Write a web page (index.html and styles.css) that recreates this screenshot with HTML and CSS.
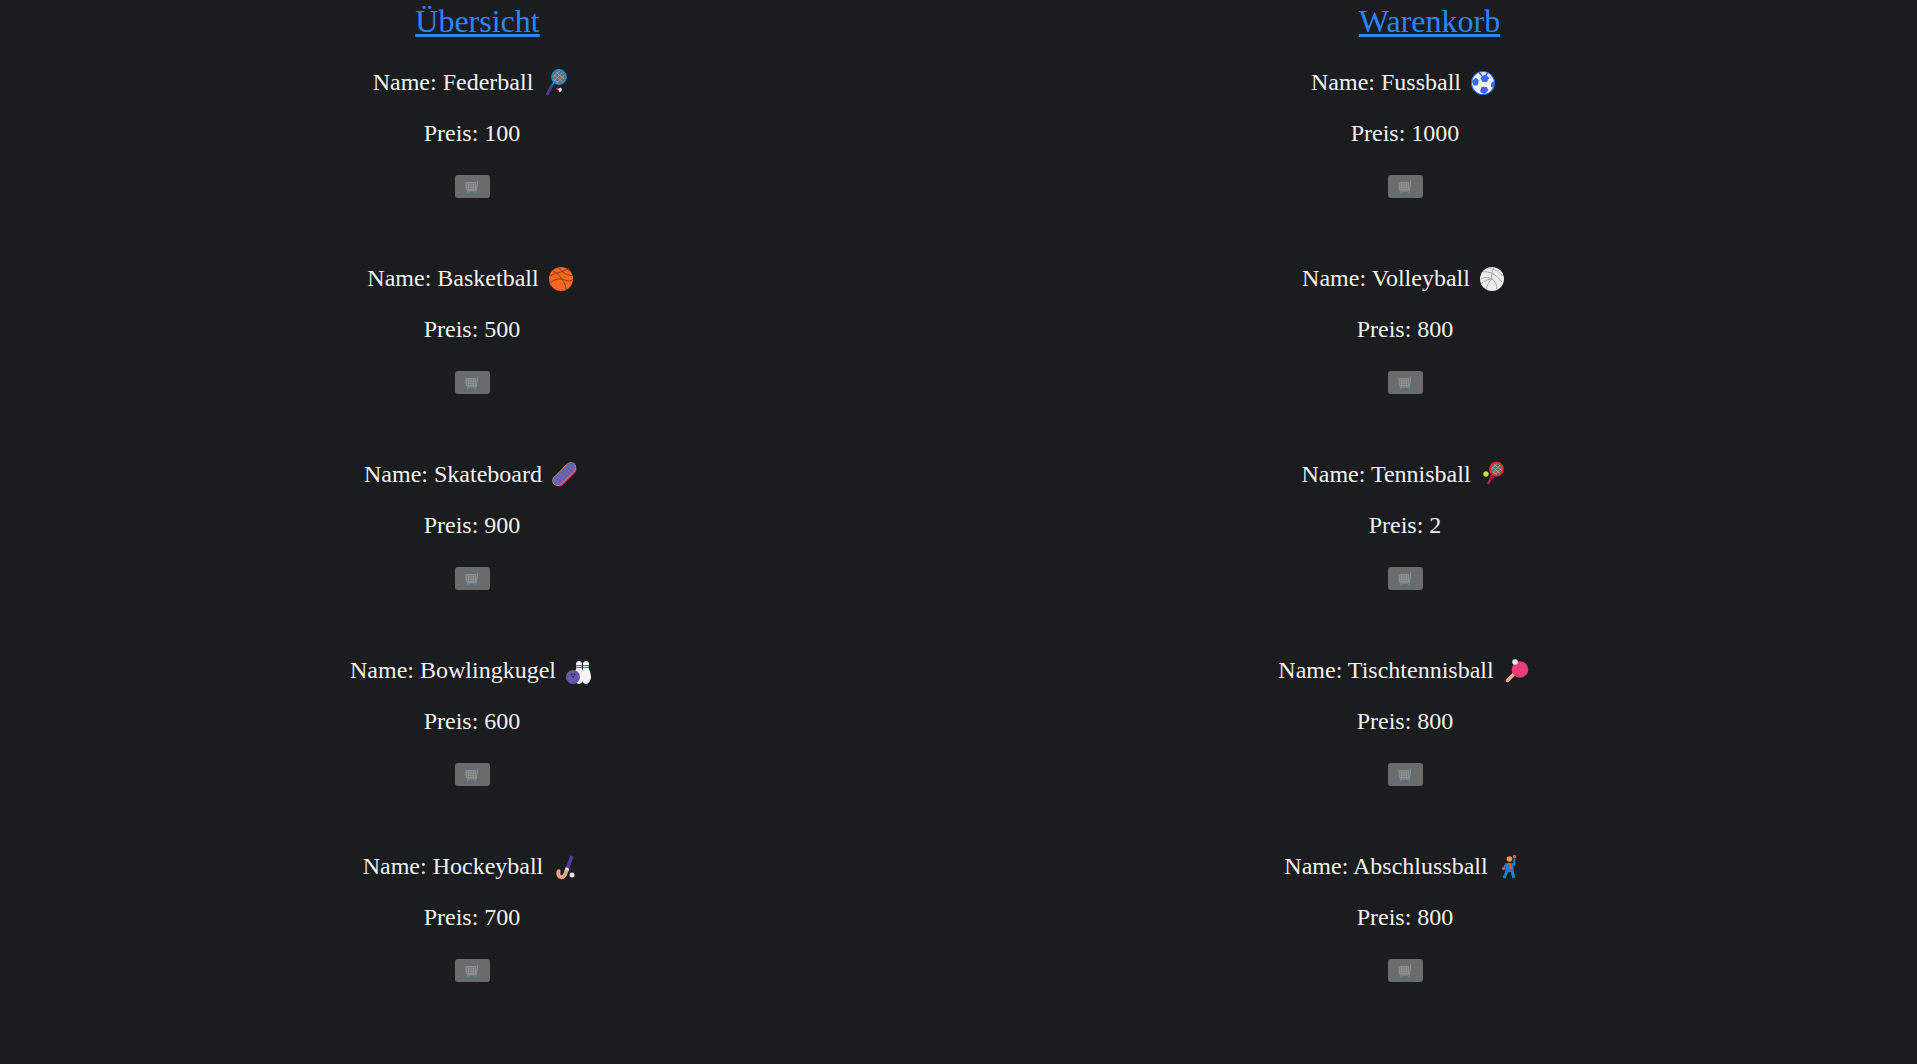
FILE: index.html
```html
<!DOCTYPE html>
<html lang="de">
<head>
    <meta charset="UTF-8">
    <meta name="viewport" content="width=device-width, initial-scale=1.0">
    <title>Sportshop</title>
    <link rel="stylesheet" href="styles.css">
</head>
<body>
    <svg class="icon-defs" aria-hidden="true">
        <symbol id="cart" viewBox="0 0 16 16">
            <path d="M1 3h11v8H1.500z" fill="#747474" stroke="#a8a8a8" stroke-width=".7"/>
            <path d="M1 5.700h11M1.300 8.300h10.700M4 3v8M6.800 3v8M9.500 3v8" stroke="#a4a4a4" stroke-width=".6"/>
            <path d="M14.500 1L13 12.500H2" fill="none" stroke="#9c9c9c" stroke-width="1"/>
            <path d="M14.300 2.200l.4-1.900" stroke="#2f95d8" stroke-width="1.400"/>
            <circle cx="3" cy="14" r="1.200" fill="#2f95d8"/>
            <circle cx="12" cy="14" r="1.200" fill="#2f95d8"/>
        </symbol>
    </svg>

    <main class="shop">
        <section class="column column-left">
            <h1 class="column-title"><a href="#">Übersicht</a></h1>

            <div class="product">
                <p>Name: Federball <svg class="emoji" viewBox="0 0 32 32"><path d="M8 28l5-10" stroke="#4b3a8f" stroke-width="3"/><path d="M13 18l3-4" stroke="#1688c8" stroke-width="2"/><circle cx="20" cy="10" r="7" fill="#66676b"/><path d="M15 8l9 7M16.500 5l9 7M14 12l6 4.500M23.500 5l-8.500 9M25.500 8l-8 8M20.500 4l-6.500 6.500" stroke="#aeafb2" stroke-width=".8"/><circle cx="20" cy="10" r="7" fill="none" stroke="#1a90cf" stroke-width="1.800"/><path d="M17 21.500l2-1 1.500 2-2 1z" fill="#e0168f"/><path d="M19 22l3-1.500 1 2.500-2.500 2.500z" fill="#f4f4f4"/></svg></p>
                <p>Preis: 100</p>
                <button class="cart-btn"><svg class="cart-icon"><use href="#cart"/></svg></button>
            </div>

            <div class="product">
                <p>Name: Basketball <svg class="emoji" viewBox="0 0 32 32"><circle cx="16" cy="16" r="12" fill="#f4681f"/><path d="M5 13c7-4 15-4 19-8M8 8c6 3 13 11 13 19M14 4.500c3 6 10 8 13.500 8M5 20c4-4 11-5 15-3 3 1.500 6 1 7.500-.5" fill="none" stroke="#8b3b1a" stroke-width="1"/></svg></p>
                <p>Preis: 500</p>
                <button class="cart-btn"><svg class="cart-icon"><use href="#cart"/></svg></button>
            </div>

            <div class="product">
                <p>Name: Skateboard <svg class="emoji" viewBox="0 0 32 32"><path d="M11.500 23L24 10.500" stroke="#d6266a" stroke-width="9" stroke-linecap="round"/><path d="M9.500 21.500c3-2 9-9 13.500-13" fill="none" stroke="#c9a06e" stroke-width="10.500" stroke-linecap="round"/><path d="M9.500 21.500c3-2 9-9 13.500-13" fill="none" stroke="#6a62ad" stroke-width="9.500" stroke-linecap="round"/><path d="M9 20l.6.6M11.500 22l.6.6M20 9l.6.6M22.500 11l.6.6" stroke="#2c2a55" stroke-width="1"/></svg></p>
                <p>Preis: 900</p>
                <button class="cart-btn"><svg class="cart-icon"><use href="#cart"/></svg></button>
            </div>

            <div class="product">
                <p>Name: Bowlingkugel <svg class="emoji" viewBox="0 0 32 32"><path d="M14 9c0-4 6-4 6 0 0 2-1 3 0 5 1 3 2 5 2 8 0 4-3 7-5 7s-5-3-5-7c0-3 1-5 2-8 .5-2 0-3 0-5z" fill="#f1eeee"/><path d="M21 9c0-4 6-4 6 0 0 2-1 3 0 5 1 3 2 5 2 8 0 4-3 7-5 7s-5-3-5-7c0-3 1-5 2-8 .5-2 0-3 0-5z" fill="#f6f4f4"/><path d="M14 10.500h6M14 12.500h6M21 10.500h6M21 12.500h6" stroke="#cf3e55" stroke-width="1"/><circle cx="11" cy="22" r="7" fill="#6856a8"/><circle cx="9.500" cy="19.500" r=".9" fill="#251f40"/><circle cx="12.500" cy="19.500" r=".9" fill="#251f40"/><circle cx="11" cy="22" r=".9" fill="#251f40"/></svg></p>
                <p>Preis: 600</p>
                <button class="cart-btn"><svg class="cart-icon"><use href="#cart"/></svg></button>
            </div>

            <div class="product">
                <p>Name: Hockeyball <svg class="emoji" viewBox="0 0 32 32"><path d="M23 5l-4.500 12" stroke="#59389c" stroke-width="3.600"/><path d="M18.500 17l-1.300 3.500" stroke="#f2f2f2" stroke-width="3.800"/><path d="M17.200 20.500c-1 3.500-2.500 6-5 5.700-2.500-.3-3.300-3-2.600-6" fill="none" stroke="#e8a28b" stroke-width="4" stroke-linecap="round"/><circle cx="23" cy="24" r="2.500" fill="#e3e3e3"/></svg></p>
                <p>Preis: 700</p>
                <button class="cart-btn"><svg class="cart-icon"><use href="#cart"/></svg></button>
            </div>
        </section>

        <section class="column column-right">
            <h1 class="column-title"><a href="#">Warenkorb</a></h1>

            <div class="product">
                <p>Name: Fussball <svg class="emoji" viewBox="0 0 32 32"><circle cx="16" cy="16" r="11.500" fill="#f1f1f4" stroke="#3266e8" stroke-width="1.200"/><path d="M15 9l4-1.500 3 3.500-2 4h-4.500l-2-3.500zM5 14l4-3.500 3 3-1.500 5H6.500zM13 24l1.500-4h5l2 3-3 3.500c-2 .5-4 .2-5.500-2.500zM24 16l3.300-2c.5 2 .5 5-.6 6.800L24 20z" fill="#3a69ee"/><path d="M12 5.500l3 3.500M21 5.500L19 8" stroke="#3a69ee" stroke-width="1.500"/></svg></p>
                <p>Preis: 1000</p>
                <button class="cart-btn"><svg class="cart-icon"><use href="#cart"/></svg></button>
            </div>

            <div class="product">
                <p>Name: Volleyball <svg class="emoji" viewBox="0 0 32 32"><circle cx="16" cy="16" r="12" fill="#ececec"/><path d="M16 16c-1-4 0-8 2-11.500M16 16c-4-2-8-2-11 0M16 16c3 2 5 6 5 10.500M12 5c3 0 10 2 14.500 8M7 9c5-1 12 1 19 10M5 21c3-3 7-5 11-5M10 26c1-3 3-8 6-10" fill="none" stroke="#a8a8a8" stroke-width="1"/></svg></p>
                <p>Preis: 800</p>
                <button class="cart-btn"><svg class="cart-icon"><use href="#cart"/></svg></button>
            </div>

            <div class="product">
                <p>Name: Tennisball <svg class="emoji" viewBox="0 0 32 32"><path d="M11 25l4-8" stroke="#c81e55" stroke-width="2.200"/><path d="M12.500 21.500l1.500-6 4 2.500z" fill="#b8164b"/><circle cx="19.500" cy="10" r="6.500" fill="#66676b"/><path d="M15 8l9 7M16.500 5l9 7M14 12l6 4M24 5l-8.500 9M25.500 8l-8 8M20.500 4l-6.500 6.500" stroke="#aeafb2" stroke-width=".8"/><circle cx="19.500" cy="10" r="6.500" fill="none" stroke="#e92b2b" stroke-width="1.800"/><circle cx="9" cy="15" r="2.700" fill="#c5e03a"/></svg></p>
                <p>Preis: 2</p>
                <button class="cart-btn"><svg class="cart-icon"><use href="#cart"/></svg></button>
            </div>

            <div class="product">
                <p>Name: Tischtennisball <svg class="emoji" viewBox="0 0 32 32"><path d="M7.500 25.500l6-6" stroke="#f0a898" stroke-width="3.500" stroke-linecap="round"/><circle cx="20" cy="14.500" r="8.300" fill="#ea3d78"/><circle cx="15" cy="7" r="2.800" fill="#e9e9e9"/></svg></p>
                <p>Preis: 800</p>
                <button class="cart-btn"><svg class="cart-icon"><use href="#cart"/></svg></button>
            </div>

            <div class="product">
                <p>Name: Abschlussball <svg class="emoji" viewBox="0 0 32 32"><circle cx="20.500" cy="5.500" r="1.700" fill="#e86a20"/><path d="M20.500 7.500l-.3 6-2.500-.5" fill="none" stroke="#1b7fd0" stroke-width="2.200"/><circle cx="15.500" cy="8" r="2.800" fill="#e8a040"/><path d="M12 12h7l1 9h-9z" fill="#1b7fd0"/><path d="M15 12h2l.6 6h-2z" fill="#d9632a"/><path d="M12.500 12.500L10 17" stroke="#1b7fd0" stroke-width="2.200"/><path d="M13 20l-3 7M18 20l2 7" stroke="#1b7fd0" stroke-width="3"/><circle cx="9.500" cy="17.500" r="1.500" fill="#e86a20"/></svg></p>
                <p>Preis: 800</p>
                <button class="cart-btn"><svg class="cart-icon"><use href="#cart"/></svg></button>
            </div>
        </section>
    </main>
</body>
</html>
```

FILE: styles.css
```css
html, body {
    margin: 0;
    padding: 0;
    height: 100%;
}

body {
    background-color: #1a1c1e;
    color: #f2f2f2;
    font-family: "Liberation Serif", "Times New Roman", serif;
    overflow: hidden;
}

.icon-defs {
    display: none;
}

.shop {
    display: grid;
    grid-template-columns: 944px 922px;
}

.column-title {
    margin: 3px 0 0;
    font-size: 32px;
    font-weight: 400;
    line-height: 37px;
    text-align: center;
}

.column-title a {
    color: #2b87ff;
    text-decoration-thickness: 3px;
}

.column-left .column-title {
    padding-left: 11px;
}

.column-right .column-title {
    padding-left: 49px;
}

.product {
    height: 196px;
    text-align: center;
    font-size: 24px;
}

.product p {
    margin: 0 0 24px;
    line-height: 27px;
}

.product:first-of-type {
    margin-top: 29px;
}

.emoji {
    width: 32px;
    height: 32px;
    margin: -8px 0;
    vertical-align: -1px;
}

.cart-btn {
    display: inline-flex;
    align-items: center;
    justify-content: center;
    width: 35px;
    height: 23px;
    padding: 0;
    margin-top: 4px;
    border: none;
    border-radius: 3px;
    background-color: #6b6b6b;
    vertical-align: top;
}

.cart-icon {
    width: 14px;
    height: 14px;
}
```
